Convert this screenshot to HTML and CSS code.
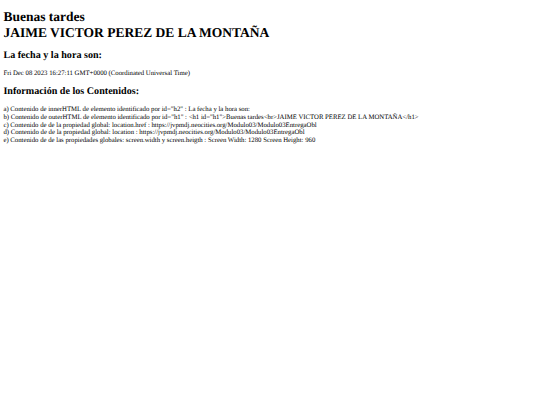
FILE: index.html
```html
<!DOCTYPE html>
<html lang="es">
<head>
    <meta charset="UTF-8">
    <title>Modulo 03</title>
    <link rel="stylesheet" href="styles.css">
</head>
<body>
    <h1 id="h1">Buenas tardes<br>JAIME VICTOR PEREZ DE LA MONTAÑA</h1>
    <h2 id="h2">La fecha y la hora son:</h2>
    <p class="fecha">Fri Dec 08 2023 16:27:11 GMT+0000 (Coordinated Universal Time)</p>
    <h2>Información de los Contenidos:</h2>
    <p class="contenidos">
        a) Contenido de innerHTML de elemento identificado por id="h2" : La fecha y la hora son:<br>
        b) Contenido de outerHTML de elemento identificado por id="h1" : &lt;h1 id="h1"&gt;Buenas tardes&lt;br&gt;JAIME VICTOR PEREZ DE LA MONTAÑA&lt;/h1&gt;<br>
        c) Contenido de de la propiedad global: location.href : https://jvpmdj.neocities.org/Modulo03/Modulo03EntregaObl<br>
        d) Contenido de de la propiedad global: location : https://jvpmdj.neocities.org/Modulo03/Modulo03EntregaObl<br>
        e) Contenido de de las propiedades globales: screen.width y screen.heigth : Screen Width: 1280 Screen Height: 960
    </p>
</body>
</html>
```

FILE: styles.css
```css
body {
    margin: 3.4px;
    font-family: "Liberation Serif", serif;
    color: #000;
    background: #fff;
    text-rendering: geometricPrecision;
}
h1 {
    font-size: 13.5px;
    line-height: 15.6px;
    margin: 6px 0 9.6px;
}
h2 {
    font-size: 10.125px;
    line-height: 11.6px;
    margin: 8.4px 0;
}
p {
    font-size: 6.75px;
    line-height: 7.7px;
}
.fecha {
    margin: 7.4px 0 8.4px;
}
.contenidos {
    margin: 8.4px 0;
}
```
